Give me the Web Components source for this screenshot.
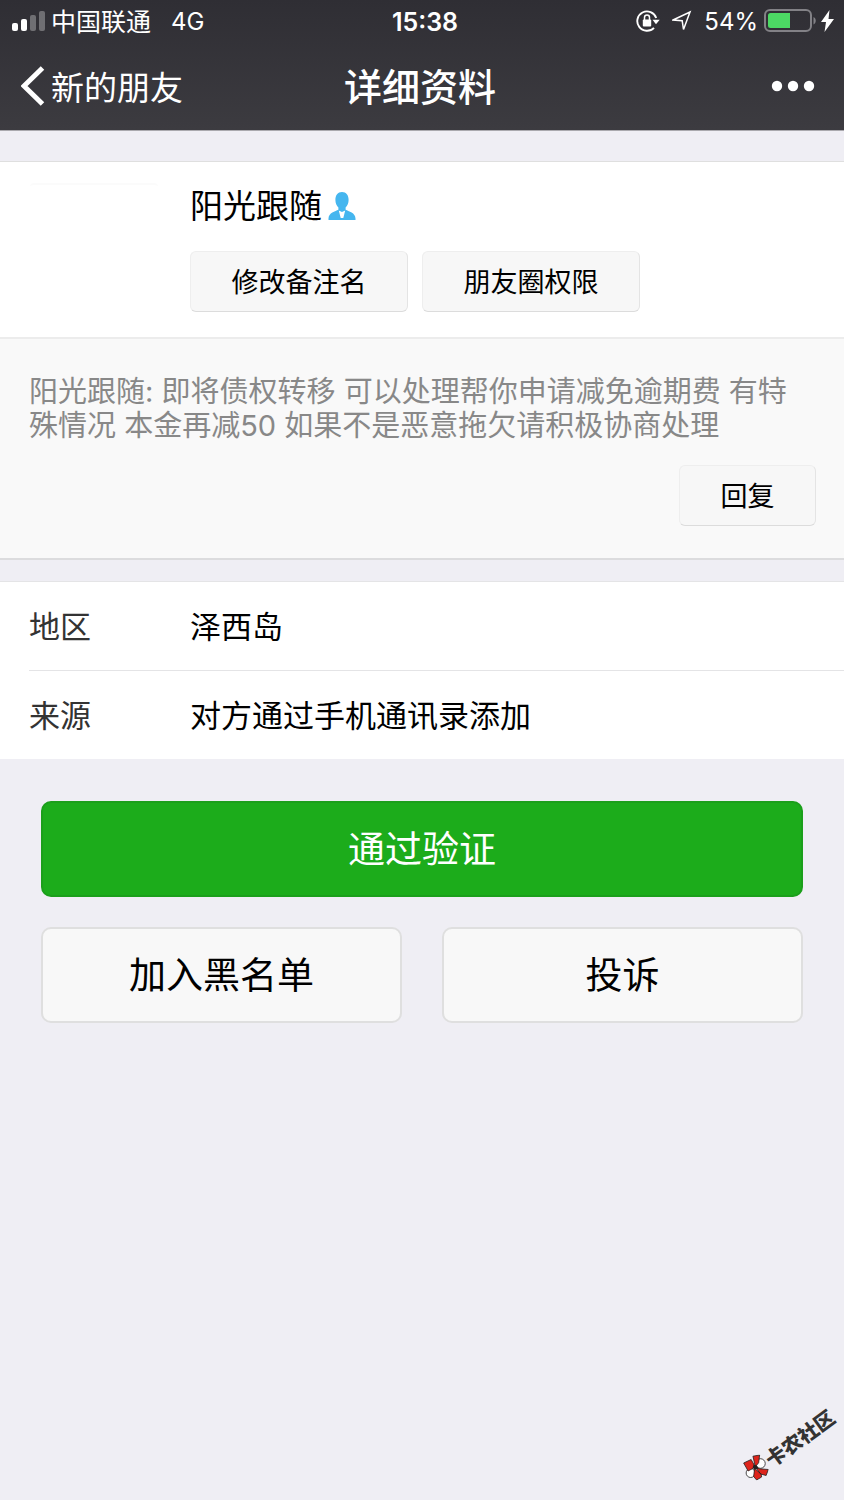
<!DOCTYPE html>
<html lang="zh-CN">
<head>
<meta charset="utf-8">
<meta name="viewport" content="width=device-width, initial-scale=1">
<title>详细资料</title>
<style>
  body { margin: 0; background: #efeef4; color: #000; font-family: Inter, "Noto Sans CJK SC", sans-serif; }
</style>
</head>
<body>
<contact-page></contact-page>

<script>
const define = (name, html) => {
  const template = document.createElement('template');
  template.innerHTML = html;
  customElements.define(name, class extends HTMLElement {
    connectedCallback() {
      if (this.shadowRoot) return;
      this.attachShadow({ mode: 'open' }).append(template.content.cloneNode(true));
    }
  });
};

define('status-bar', `
  <style>
    :host { display: grid; grid-template-columns: 1fr auto 1fr; align-items: center; height: 42px; padding: 0 10px 0 12px; font-size: 24px; line-height: 30px; color: #fff; }
    .side { display: flex; align-items: center; }
    .carrier { margin: 0 20px 0 6px; font-size: 25px; }
    .side span, time { padding-top: 2px; }
    time { padding-left: 4px; font-weight: 600; font-size: 25px; }
    .end { justify-content: flex-end; }
    .end span { margin: 0 6px 0 12px; }
    .end .arrow { margin-left: 12px; }
    svg { display: block; flex: none; }
    .bolt { margin-left: 5px; }
  </style>
  <div class="side">
    <svg width="33" height="22" viewBox="0 0 33 22" aria-label="信号"><g fill="#fff"><rect y="13" width="6" height="8" rx="2"/><rect x="9" y="9" width="6" height="12" rx="2"/><g opacity=".3"><rect x="18" y="5" width="6" height="16" rx="2"/><rect x="27" y="1" width="6" height="20" rx="2"/></g></g></svg>
    <span class="carrier">中国联通</span><span>4G</span>
  </div>
  <time>15:38</time>
  <div class="side end">
    <svg width="24" height="22" viewBox="0 0 24 22" aria-label="方向锁定"><path d="M20.200 8A9.700 9.700 0 1 0 18 17.800" fill="none" stroke="#fff" stroke-width="1.900"/><path d="M16.500 9.800h7.200L20 14.200z" fill="#fff"/><rect x="6.800" y="9.600" width="8.400" height="7" rx="1" fill="#fff"/><path d="M8.500 10V7.500a2.500 2.500 0 0 1 5 0V10" fill="none" stroke="#fff" stroke-width="1.500"/></svg>
    <svg class="arrow" width="20" height="22" viewBox="0 0 20 22" aria-label="定位"><path d="M1 10 18 2 11.500 19.500 10.200 10.800z" fill="none" stroke="#fff" stroke-width="1.500"/></svg>
    <span>54%</span>
    <svg width="52" height="24" viewBox="0 0 52 24" aria-label="电池"><rect x="1" y="1" width="46" height="21" rx="5" fill="none" stroke="#828186" stroke-width="2"/><path d="M6.500 4H26v15H6.500a2.500 2.500 0 0 1-2.500-2.500v-10A2.500 2.500 0 0 1 6.500 4z" fill="#4cd964"/><path d="M49.500 8c3 1.500 3 6 0 7.500z" fill="#828186"/></svg>
    <svg class="bolt" width="13" height="22" viewBox="0 0 13 22" aria-label="充电中"><path d="M8.500 0 0 12h5L3.500 22 13 9H7.500z" fill="#fff"/></svg>
  </div>`);

define('nav-bar', `
  <style>
    :host { display: grid; grid-template-columns: 1fr auto 1fr; align-items: center; height: 88px; padding: 0 29px 0 21px; color: #fff; }
    a { display: flex; align-items: center; gap: 6px; color: inherit; text-decoration: none; font-size: 33px; line-height: 40px; }
    a span { padding-top: 3px; }
    h1 { margin: 0; padding: 1px 0 0 4px; font-size: 38px; line-height: 48px; font-weight: 500; }
    button { justify-self: end; display: block; padding: 16px 0; border: 0; background: none; }
    svg { display: block; }
  </style>
  <a href="#friends"><svg width="24" height="40" viewBox="0 0 24 40"><path d="M21.500 2 3 20 21.500 38" fill="none" stroke="#fff" stroke-width="5"/></svg><span><slot name="back"></slot></span></a>
  <h1><slot></slot></h1>
  <button type="button" aria-label="更多"><svg width="44" height="12" viewBox="0 0 44 12" fill="#fff"><circle cx="6" cy="6" r="5.200"/><circle cx="22" cy="6" r="5.200"/><circle cx="38" cy="6" r="5.200"/></svg></button>`);

define('app-button', `
  <style>
    :host { display: block; }
    button { display: block; box-sizing: border-box; width: 100%; margin: 0; font-family: inherit; cursor: pointer;
      height: 61px; padding: 2px 0 0; border: 1px solid; border-color: #eee #e4e4e4 #dcdcdc #eee; border-radius: 6px; background: #f7f7f7; color: #000; font-size: 27px; line-height: 36px; }
    :host([large]) button { height: 96px; border: 2px solid #dfdfdf; border-radius: 10px; background: #f8f8f8; font-size: 37px; line-height: 48px; }
    :host([primary]) button { border-color: #1b9f1b; background: #1cac1b; color: #fff; }
  </style>
  <button type="button"><slot></slot></button>`);

define('profile-card', `
  <style>
    :host { display: flex; gap: 32px; padding: 21px 30px 25px; border-top: 1px solid #dfdfdf; background: #fff; }
    .avatar { flex: none; width: 128px; height: 128px; box-sizing: border-box; border-top: 2px solid #fbfbfb; border-radius: 4px; }
    .main { flex: 1; }
    .name { display: flex; align-items: center; gap: 6px; }
    h2 { margin: 0; font-size: 33px; line-height: 46px; font-weight: 400; }
    .actions { display: grid; grid-template-columns: repeat(2, minmax(0, 218px)); gap: 14px; margin-top: 22px; }
  </style>
  <div class="avatar" role="img" aria-label="头像"></div>
  <div class="main">
    <div class="name"><h2><slot></slot></h2>
      <svg width="28" height="28" viewBox="0 0 28 28" aria-label="个人"><path d="M14 0c4.200 0 6.600 3.200 6.600 8 0 3-1.200 5.800-3 7.600v2.200c3 1.600 9.900 3 9.900 8.700V28H.5v-1.500c0-5.700 6.900-7.100 9.900-8.700v-2.200C8.600 13.800 7.400 11 7.400 8 7.400 3.200 9.800 0 14 0z" fill="#45b6ef"/><path d="M10.800 18.600 14 20l3.200-1.400L15.300 26h-2.600z" fill="#fff"/></svg>
    </div>
    <div class="actions"><slot name="actions"></slot></div>
  </div>`);

define('verify-message', `
  <style>
    :host { display: block; padding: 36px 28px 32px 29px; border-top: 2px solid #ececec; border-bottom: 2px solid #dcdcde; background: #f9f9f9; }
    p { margin: 0; padding-right: 20px; font-size: 29px; line-height: 34px; color: #888; }
    .reply { display: flex; justify-content: flex-end; margin-top: 22px; }
    app-button { width: 137px; }
  </style>
  <p><slot></slot></p>
  <div class="reply"><app-button>回复</app-button></div>`);

define('info-row', `
  <style>
    :host { display: block; padding-left: 29px; background: #fff; }
    dl { display: grid; grid-template-columns: 161px 1fr; align-items: center; height: 86px; margin: 0; padding-top: 2px; border-top: 1px solid #e4e4e6; font-size: 31px; line-height: 40px; }
    :host([first]) { padding-left: 0; }
    :host([first]) dl { padding-left: 29px; }
    dt { color: #333; }
    dd { margin: 0; }
  </style>
  <dl><dt><slot name="label"></slot></dt><dd><slot></slot></dd></dl>`);

define('site-mark', `
  <style>
    :host { display: flex; align-items: center; font-size: 20px; line-height: 26px; font-weight: 900; color: #333; transform: rotate(-36deg); }
    svg { display: block; transform: rotate(36deg); }
    span { padding-top: 6px; }
  </style>
  <svg width="26" height="26" viewBox="0 0 26 26"><g stroke="#222" stroke-width=".8"><circle cx="17.800" cy="9" r="4.800" fill="#fff"/><circle cx="8" cy="18.500" r="4.500" fill="#fff"/><path d="M1 8.500 8.500 5l4.200 7.500L5.500 16.500zM10.300 1.700 17 .5l-1 7.800-3.300 4zM12.700 12.500l4.300 1.800 8.700.7L23.500 21 18 19.500zM12 14l6.500 5.500.5 3-5 3L11 22z" fill="#de241b"/></g><path d="m11 10 3 1 2 3-4 1-2-2z" fill="#222"/></svg>
  <span><slot></slot></span>`);

define('contact-page', `
  <style>
    :host { display: block; position: relative; min-height: 100vh; }
    header { background: linear-gradient(#2f2e34, #3c3b40); border-bottom: 1px solid #aaa9ae; }
    profile-card { margin-top: 30px; }
    .info { margin-top: 21px; }
    .buttons { display: grid; grid-template-columns: 1fr 1fr; gap: 30px 40px; padding: 42px 41px; }
    .wide { grid-column: 1 / -1; }
    site-mark { position: absolute; right: 3px; bottom: 40px; }
  </style>
  <header>
    <status-bar></status-bar>
    <nav-bar><span slot="back">新的朋友</span>详细资料</nav-bar>
  </header>
  <main>
    <profile-card>阳光跟随
      <app-button slot="actions">修改备注名</app-button>
      <app-button slot="actions">朋友圈权限</app-button>
    </profile-card>
    <verify-message>阳光跟随: 即将债权转移 可以处理帮你申请减免逾期费 有特殊情况 本金再减50 如果不是恶意拖欠请积极协商处理</verify-message>
    <section class="info">
      <info-row first><span slot="label">地区</span>泽西岛</info-row>
      <info-row><span slot="label">来源</span>对方通过手机通讯录添加</info-row>
    </section>
    <div class="buttons">
      <app-button class="wide" large primary>通过验证</app-button>
      <app-button large>加入黑名单</app-button>
      <app-button large>投诉</app-button>
    </div>
  </main>
  <site-mark>卡农社区</site-mark>`);
</script>
</body>
</html>
